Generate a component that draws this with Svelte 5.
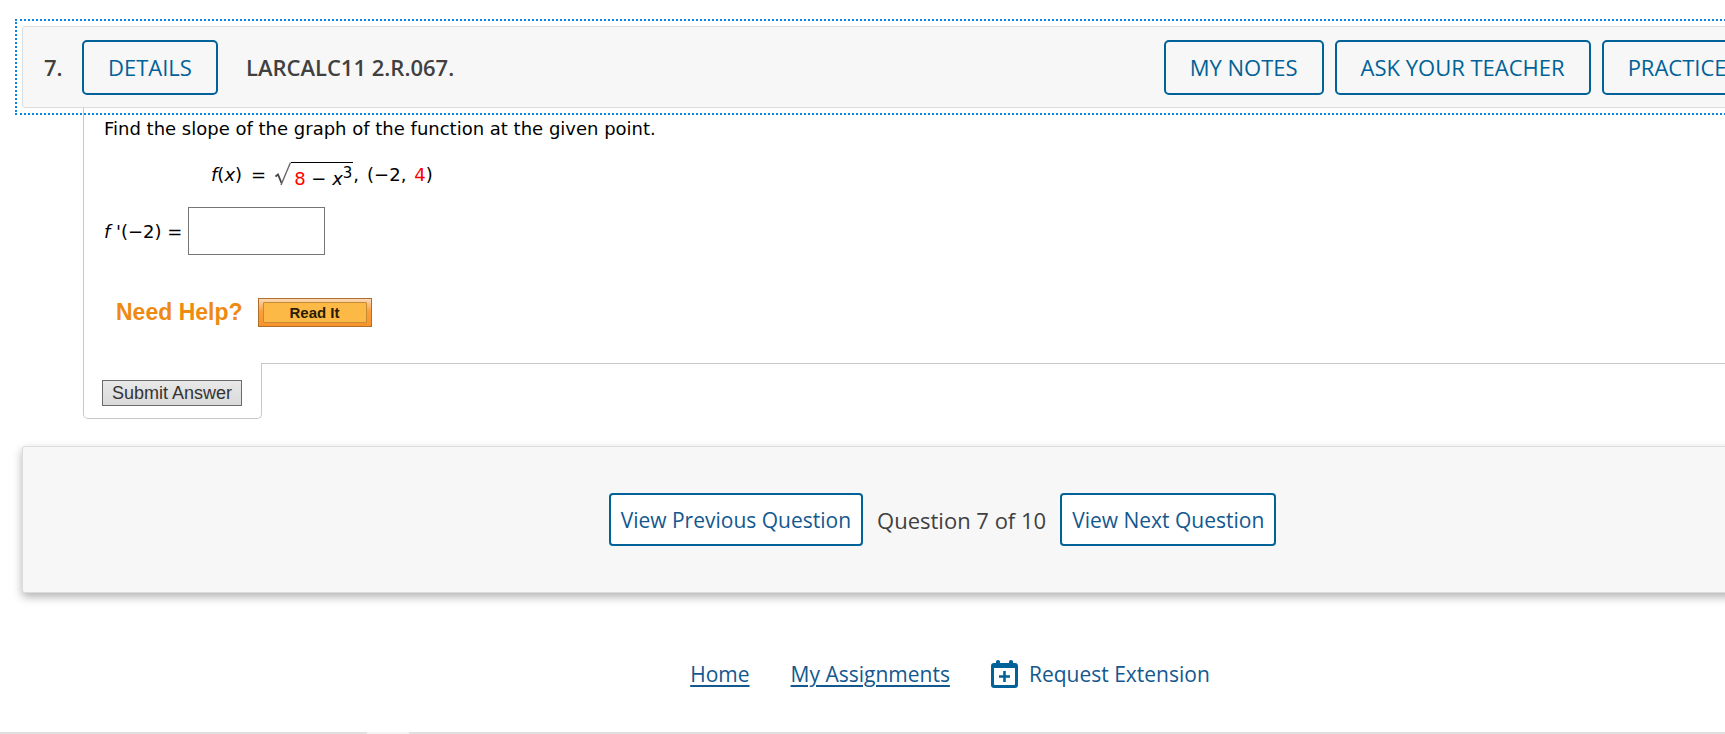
<script>
  let answer = $state('');
</script>

<div class="page">
  <header class="focus">
    <div class="bar">
      <span class="num">7.</span>
      <button class="outline">DETAILS</button>
      <h1>LARCALC11 2.R.067.</h1>
      <div class="tools">
        <button class="outline">MY NOTES</button>
        <button class="outline">ASK YOUR TEACHER</button>
        <button class="outline">PRACTICE ANOTHER</button>
      </div>
    </div>
  </header>

  <main>
    <div class="question">
      <p class="prompt">Find the slope of the graph of the function at the given point.</p>
      <div class="formula">
        <span><i>f</i>(<i>x</i>)</span>
        <span class="equals">=</span>
        <svg class="root" viewBox="0 0 16 24" aria-hidden="true">
          <path d="M0.5 14.5 L3 12.5 L6.5 21" fill="none" stroke="#444" stroke-width="1.8" />
          <path d="M6 23 L15.5 0.5" fill="none" stroke="#666" stroke-width="1.4" />
        </svg>
        <span class="radicand"><b>8</b> − <i>x</i><sup>3</sup></span>
        <span>,</span>
        <span class="point">(−2,</span>
        <span class="point"><b>4</b>)</span>
      </div>
      <div class="answer">
        <label for="answer"><i>f '</i>(−2) =</label>
        <input id="answer" type="text" bind:value={answer} />
      </div>
      <div class="help">
        <strong>Need Help?</strong>
        <button class="read"><span>Read It</span></button>
      </div>
    </div>
    <div class="bottom">
      <div class="tab"><button class="submit">Submit Answer</button></div>
      <div class="rule"></div>
    </div>
  </main>

  <nav class="pager">
    <button>View Previous Question</button>
    <span>Question 7 of 10</span>
    <button>View Next Question</button>
  </nav>

  <footer>
    <a href="#home">Home</a>
    <a href="#assignments">My Assignments</a>
    <a class="extension" href="#extension">
      <svg viewBox="0 0 27 28" aria-hidden="true">
        <path
          fill="#006298"
          fill-rule="evenodd"
          d="M5 3V1.5Q5 0 7 0T9 1.5V3H18V1.5Q18 0 20 0T22 1.5V3H24Q27 3 27 6V25Q27 28 24 28H3Q0 28 0 25V6Q0 3 3 3ZM3 8V24Q3 25 4 25H23Q24 25 24 24V8Z"
        />
        <path d="M13.5 11V22M8 16.5H19" stroke="#006298" stroke-width="2.6" />
      </svg>
      Request Extension
    </a>
  </footer>
</div>
<div class="edge"><span></span><span></span></div>

<style>
  :global(html),
  :global(body) {
    overflow: hidden;
    background: #fff;
  }
  :global(body) {
    margin: 0;
  }
  .page {
    box-sizing: border-box;
    width: calc(100% + 160px);
    padding: 19px 15px 0;
    font-family: 'Open Sans', sans-serif;
    font-size: 22px;
    color: #404040;
  }
  button {
    font: inherit;
    cursor: pointer;
  }
  .focus {
    border: 2px dotted #0a84e0;
    padding: 5px;
  }
  .bar {
    display: flex;
    align-items: center;
    box-sizing: border-box;
    height: 82px;
    padding: 0 2px 0 21px;
    border: 1px solid #dcdcdc;
    border-radius: 3px;
    background: #f7f7f7;
  }
  .num {
    width: 38px;
    font-weight: 600;
  }
  h1 {
    margin: 0 0 0 28px;
    font-size: 22px;
    font-weight: 600;
  }
  .outline {
    height: 55px;
    padding: 0 24px;
    border: 2px solid #006298;
    border-radius: 5px;
    background: transparent;
    color: #006298;
    font-weight: 500;
    white-space: nowrap;
  }
  .tools {
    display: flex;
    gap: 11px;
    margin-left: auto;
  }
  main {
    margin: -7px 0 0 68px;
    font-family: 'DejaVu Sans', sans-serif;
    font-size: 18px;
    color: #000;
  }
  .question {
    padding: 10px 20px 36px;
    border-left: 1px solid #c8c8c8;
  }
  .prompt {
    margin: 0;
    line-height: 22px;
  }
  .formula {
    display: flex;
    margin: 22px 0 0 107px;
    line-height: 26px;
  }
  .formula b {
    color: #f00;
    font-weight: 400;
  }
  .equals {
    margin: 0 9px;
  }
  .point {
    margin-left: 8px;
  }
  .root {
    width: 16px;
    height: 24px;
  }
  .radicand {
    padding: 3px 1px 0 3px;
    border-top: 1px solid #000;
  }
  sup {
    font-size: 15px;
    line-height: 0;
  }
  .answer {
    display: flex;
    align-items: center;
    gap: 6px;
    margin-top: 15px;
  }
  .answer input {
    box-sizing: border-box;
    width: 137px;
    height: 48px;
    border: 1px solid #767676;
    padding: 4px 8px;
    font: inherit;
  }
  .help {
    display: flex;
    align-items: center;
    gap: 15px;
    margin: 43px 0 0 12px;
    font-family: 'Liberation Sans', sans-serif;
  }
  .help strong {
    padding-bottom: 2px;
    font-size: 23px;
    line-height: 26px;
    color: #ee8a12;
  }
  .read {
    display: flex;
    box-sizing: border-box;
    width: 114px;
    height: 29px;
    padding: 3px 4px;
    border: 1px solid #b06f28;
    background: linear-gradient(#fcd9b8, #f9a03c 45%, #f7932c);
    font-size: 15px;
    font-weight: 700;
    color: #2a1c00;
  }
  .read span {
    flex: 1;
    border: 1px solid #c98a35;
    border-radius: 1px;
    background: #fdb945;
    line-height: 20px;
  }
  .bottom {
    display: flex;
  }
  .tab {
    box-sizing: border-box;
    height: 56px;
    padding: 17px 19px 0 18px;
    border: 1px solid #c8c8c8;
    border-top: 0;
    border-radius: 0 0 5px 5px;
  }
  .rule {
    flex: 1;
    border-top: 1px solid #c8c8c8;
  }
  .submit {
    display: block;
    height: 26px;
    padding: 0 9px;
    border: 1px solid #6b6b6b;
    background: linear-gradient(#e8e8e8, #dadada);
    font-family: 'Liberation Sans', sans-serif;
    font-size: 18px;
    line-height: 22px;
    color: #333;
  }
  .pager {
    display: flex;
    align-items: center;
    justify-content: center;
    gap: 14px;
    margin: 27px 7px 0;
    padding: 46px 0;
    border: 1px solid #dcdcdc;
    border-radius: 3px;
    background: #f7f7f7;
    box-shadow: 0 4px 10px rgba(0, 0, 0, 0.3);
  }
  .pager button {
    height: 53px;
    padding: 0 10px;
    border: 2px solid #006298;
    border-radius: 4px;
    background: #fff;
    color: #13588f;
    font-size: 21px;
  }
  footer {
    display: flex;
    justify-content: center;
    gap: 41px;
    margin: 65px 0 0 15px;
    font-size: 21px;
    line-height: 32px;
  }
  footer a {
    color: #13588f;
    text-decoration-thickness: 2px;
    text-underline-offset: 3px;
  }
  .extension {
    display: flex;
    align-items: center;
    gap: 11px;
    text-decoration: none;
  }
  .extension svg {
    width: 27px;
    height: 28px;
  }
  .edge {
    position: fixed;
    inset: auto 0 0;
    display: flex;
    gap: 42px;
    height: 2px;
    background: #f4f4f4;
  }
  .edge span {
    width: 367px;
    background: #e0e0e0;
  }
  .edge span:last-child {
    flex: 1;
  }
</style>
